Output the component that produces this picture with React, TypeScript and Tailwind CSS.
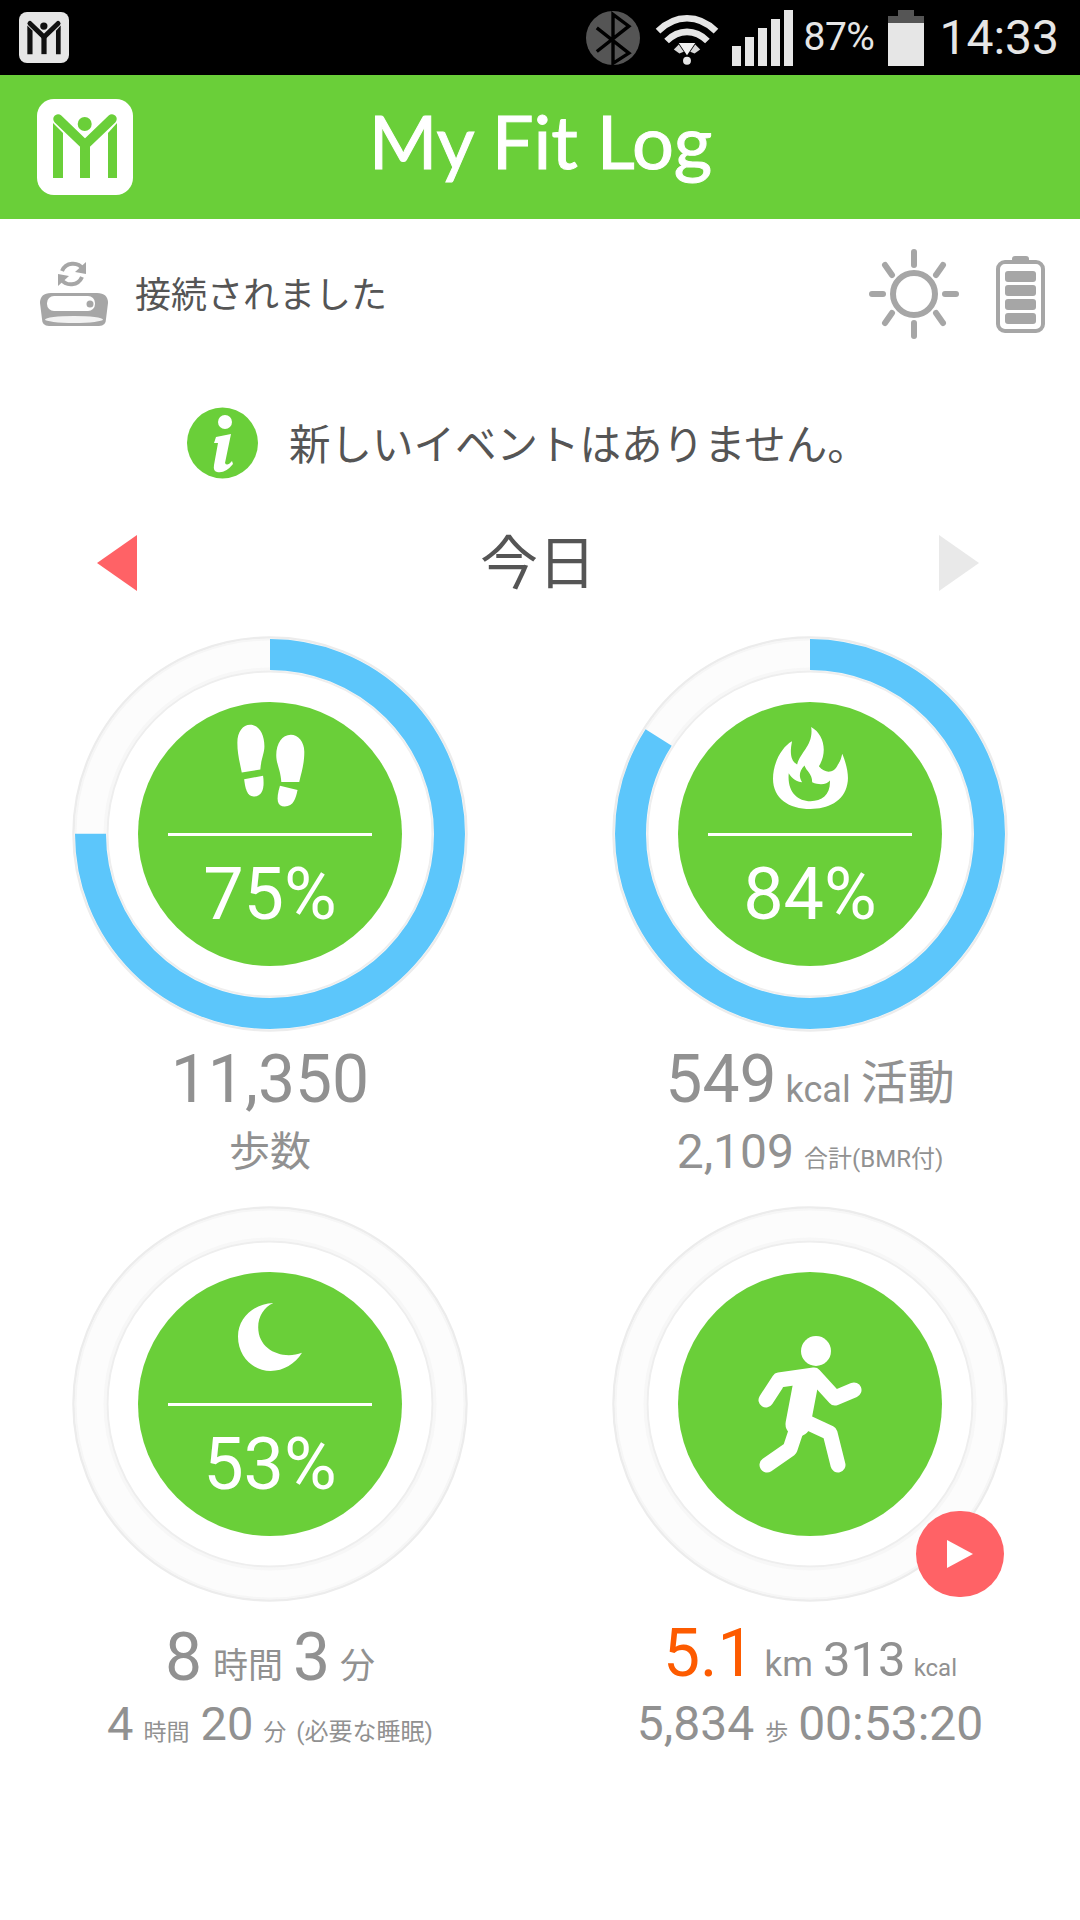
import React from "react";

const GREEN = "#6acf39";
const BLUE = "#5cc6fb";
const GREY = "#a6a6a6";

// Brand mark, shared by the status bar and the header
const LogoMark = ({ color, size }: { color: string; size: number }) => (
  <svg width={size} height={size} viewBox="0 0 96 96">
    <path d="M16 24 L26 34 V79 H16 Z" fill={color} />
    <path d="M80 24 L71 34 V79 H80 Z" fill={color} />
    <rect x="43" y="44" width="10" height="35" fill={color} />
    <path d="M21 20 L48 46 L75 20" fill="none" stroke={color} strokeWidth="9.5" strokeLinecap="round" />
    <circle cx="47.7" cy="25" r="7" fill={color} />
  </svg>
);

const StatusBar = () => (
  <div className="h-[75px] bg-black flex items-center pl-[19px] pr-[21px] text-[#e6e6e6]">
    <div className="w-[50px] h-[51px] bg-[#e6e6e6] rounded-[8px] flex items-center justify-center">
      <LogoMark color="#111" size={50} />
    </div>
    <div className="ml-auto flex items-center">
      <svg width="54" height="54" viewBox="18 30 160 160">
        <circle cx="98" cy="110" r="80" fill="#555" />
        <path d="M50 80 L145 155 L98 185 L98 40 L145 75 L50 150" fill="none" stroke="#000" strokeWidth="10" />
      </svg>
      <svg className="ml-[14px] mt-[5px]" width="66" height="52" viewBox="220 40 200 158">
        <path d="M232 92 C285 40 355 40 408 92" fill="none" stroke="#e6e6e6" strokeWidth="20" />
        <path d="M258 122 C295 85 345 85 382 122" fill="none" stroke="#e6e6e6" strokeWidth="20" />
        <path d="M295 128 L345 128 L320 165 Z" fill="#f2f2f2" />
        <path d="M280 148 L295 133 L310 155 L297 160 Z" fill="#d8d8d8" />
        <path d="M360 148 L345 133 L330 155 L343 160 Z" fill="#d8d8d8" />
        <circle cx="320" cy="182" r="12" fill="#e6e6e6" />
      </svg>
      <svg className="ml-[12px]" width="61" height="56" viewBox="0 0 61 56">
        <rect x="0" y="36" width="9" height="20" fill="#e6e6e6" />
        <rect x="13" y="27" width="9" height="29" fill="#e6e6e6" />
        <rect x="26" y="18" width="9" height="38" fill="#e6e6e6" />
        <rect x="39" y="9" width="9" height="47" fill="#e6e6e6" />
        <rect x="52" y="0" width="9" height="56" fill="#e6e6e6" />
      </svg>
      <span className="ml-[10px] text-[39px] leading-none tracking-[-0.5px] w-[72px]">87%</span>
      <svg className="ml-[13px]" width="36" height="56" viewBox="0 0 36 56">
        <rect x="10" y="0" width="16" height="7" fill="#555" />
        <rect x="0" y="6" width="36" height="7" fill="#555" />
        <rect x="0" y="13" width="36" height="43" fill="#e6e6e6" />
      </svg>
      <span className="ml-[15px] text-[48px] leading-none">14:33</span>
    </div>
  </div>
);

const Header = () => (
  <div className="h-[144px] bg-[#6acf39] flex items-center pl-[37px] pr-[132px]">
    <div className="w-[96px] h-[96px] bg-white rounded-[17px]">
      <LogoMark color={GREEN} size={96} />
    </div>
    <div className="flex-1 text-center text-white text-[74px] leading-none font-[Lato,sans-serif] pb-[12px] [-webkit-text-stroke:1px_white]">
      My Fit Log
    </div>
  </div>
);

const ConnectionRow = () => (
  <div className="h-[150px] flex items-center pl-[39px] pr-[35px]">
    <svg width="71" height="66" viewBox="0 0 71 66">
      <path d="M23 10 A12 12 0 0 1 44 8" fill="none" stroke={GREY} strokeWidth="4" />
      <path d="M47 1 L47 13 L36 11 Z" fill={GREY} />
      <path d="M43 16 A12 12 0 0 1 22 18" fill="none" stroke={GREY} strokeWidth="4" />
      <path d="M19 25 L19 13 L30 15 Z" fill={GREY} />
      <path d="M1 42 Q1 32 12 32 L58 32 Q69 32 69 42 L67 58 Q67 65 60 65 L10 65 Q3 65 3 58 Z" fill={GREY} />
      <rect x="8" y="35" width="48" height="15" rx="7" fill="#fff" />
      <circle cx="51" cy="43" r="3.5" fill={GREY} />
      <ellipse cx="35" cy="58.5" rx="29" ry="3.5" fill="#f2f2f2" />
    </svg>
    <span className="ml-[25px] mt-[4px] text-[36px] leading-none text-[#555555]">接続されました</span>
    <svg className="ml-auto" width="90" height="90" viewBox="0 0 90 90">
      <circle cx="45" cy="45" r="21" fill="none" stroke={GREY} strokeWidth="6" />
      <g stroke={GREY} strokeWidth="6" strokeLinecap="round">
        <path d="M45 3 V16" />
        <path d="M45 74 V87" />
        <path d="M3 45 H14" />
        <path d="M76 45 H87" />
        <path d="M16 16 L23 26" />
        <path d="M74 16 L67 26" />
        <path d="M16 74 L23 64" />
        <path d="M74 74 L67 64" />
      </g>
    </svg>
    <svg className="ml-[37px]" width="49" height="77" viewBox="0 0 49 77">
      <rect x="16" y="0" width="17" height="8" rx="3" fill={GREY} />
      <rect x="2" y="6" width="45" height="69" rx="7" fill="none" stroke={GREY} strokeWidth="4" />
      <rect x="9" y="15" width="31" height="11" rx="3" fill={GREY} />
      <rect x="9" y="29" width="31" height="11" rx="3" fill={GREY} />
      <rect x="9" y="43" width="31" height="11" rx="3" fill={GREY} />
      <rect x="9" y="57" width="31" height="11" rx="3" fill={GREY} />
    </svg>
  </div>
);

const InfoRow = () => (
  <div className="mt-[38px] h-[72px] flex items-center pl-[187px]">
    <svg width="71" height="72" viewBox="0 0 71 72">
      <circle cx="35.5" cy="36" r="35.5" fill={GREEN} />
      <ellipse cx="38" cy="15" rx="7" ry="7" fill="#fff" />
      <path d="M29 30 L44 27 L38 56 Q40 60 45 54 L46 57 Q38 67 30 65 Q26 64 27 58 L31 36 L27 36 Z" fill="#fff" />
    </svg>
    <span className="ml-[31px] mt-[6px] text-[41.5px] leading-none text-[#555555]">新しいイベントはありません。</span>
  </div>
);

const DayNav = () => (
  <div className="mt-[56px] h-[56px] flex items-center justify-between pl-[97px] pr-[101px]">
    <svg width="40" height="56" viewBox="0 0 40 56">
      <path d="M40 0 V56 L0 28 Z" fill="#ff6266" />
    </svg>
    <span className="mb-[8px] text-[58px] leading-none text-[#555555] font-['Noto_Sans_CJK_JP',sans-serif]">今日</span>
    <svg width="40" height="56" viewBox="0 0 40 56">
      <path d="M0 0 V56 L40 28 Z" fill="#e9e9e9" />
    </svg>
  </div>
);

// Progress ring with the green disc in the middle
const Ring = ({ percent, children }: { percent?: number; children: React.ReactNode }) => {
  const r = 179.5;
  const c = 2 * Math.PI * r;
  return (
    <div className="relative w-[396px] h-[396px] flex items-center justify-center">
      <svg className="absolute inset-0" width="396" height="396" viewBox="0 0 396 396">
        <circle cx="198" cy="198" r="196.5" fill="#fcfcfc" stroke="#ececec" strokeWidth="2.5" />
        <circle cx="198" cy="198" r="194.5" fill="none" stroke="#f6f6f6" strokeWidth="2" />
        <circle cx="198" cy="198" r="165" fill="none" stroke="#f7f7f7" strokeWidth="3" />
        <circle cx="198" cy="198" r="162.5" fill="#fff" stroke="#eeeeee" strokeWidth="2" />
        {percent !== undefined && (
          <circle
            cx="198"
            cy="198"
            r={r}
            fill="none"
            stroke={BLUE}
            strokeWidth="31"
            strokeDasharray={`${(c * percent) / 100} ${c}`}
            transform="rotate(-90 198 198)"
          />
        )}
      </svg>
      <div className="relative w-[264px] h-[264px] rounded-full bg-[#6acf39] flex flex-col items-center text-white">
        {children}
      </div>
    </div>
  );
};

const Disc = ({ icon, pb, label }: { icon: React.ReactNode; pb: string; label: string }) => (
  <>
    <div className={`h-[131px] flex items-end ${pb}`}>{icon}</div>
    <div className="w-[204px] h-[3px] bg-white" />
    <div className="mt-[23px] text-[72px] leading-none">{label}</div>
  </>
);

const Feet = (
  <svg width="71" height="86" viewBox="525 295 210 240" preserveAspectRatio="none">
    <g fill="#fff">
      <path d="M570 300 C595 300 612 325 612 360 C612 380 602 395 600 425 L545 433 C538 400 532 380 532 350 C532 320 548 300 570 300 Z" />
      <path d="M552 452 L608 442 C612 470 610 500 580 500 C560 500 555 475 552 452 Z" />
      <path d="M690 328 C665 328 647 352 647 385 C647 410 660 425 662 460 L715 460 C722 430 730 410 730 375 C730 348 712 328 690 328 Z" />
      <path d="M658 470 L710 482 C705 505 698 528 672 528 C650 528 645 510 658 470 Z" />
    </g>
  </svg>
);

const Flame = (
  <svg width="75" height="82" viewBox="518 300 224 230" preserveAspectRatio="none">
    <path
      fill="#fff"
      fillRule="evenodd"
      d="M632 300 C670 320 682 370 655 410 C675 432 700 430 712 405 C720 395 722 385 725 375 C740 410 745 440 740 460 C730 510 680 530 630 530 C565 530 518 500 518 445 C518 400 545 355 575 340 C568 370 570 395 590 405 C600 370 640 350 632 300 Z M565 430 C575 445 590 455 605 455 C595 440 595 425 612 408 C618 425 635 430 635 455 C660 465 680 460 688 450 C690 490 665 508 630 508 C590 508 560 480 565 430 Z"
    />
  </svg>
);

const Moon = (
  <svg width="64" height="68" viewBox="535 293 190 187" preserveAspectRatio="none">
    <path
      fill="#fff"
      d="M640 293 C580 295 535 335 535 385 C535 440 580 480 632 480 C670 480 705 460 725 430 C670 450 595 425 595 360 C595 330 612 305 640 293 Z"
    />
  </svg>
);

const Runner = () => (
  <svg width="104" height="137" viewBox="0 0 104 137">
    <circle cx="58" cy="15" r="15" fill="#fff" />
    <g fill="none" stroke="#fff" strokeLinecap="round" strokeLinejoin="round">
      <path d="M8 64 L21 44 L56 39 L77 62 L96 54" strokeWidth="15" />
      <path d="M48 46 L40 88" strokeWidth="25" />
      <path d="M39 92 L32 113 L9 129" strokeWidth="15" />
      <path d="M44 84 L72 97 L80 129" strokeWidth="15" />
    </g>
  </svg>
);

export default function App() {
  return (
    <div className="w-[1080px] h-[1920px] bg-white flex flex-col font-[Roboto,'Noto_Sans_CJK_JP',sans-serif]">
      <StatusBar />
      <Header />
      <ConnectionRow />
      <InfoRow />
      <DayNav />

      <div className="mt-[45px] grid grid-cols-2 auto-rows-[570px] text-[#919191]">
        <div className="flex flex-col items-center">
          <Ring percent={75}>
            <Disc icon={Feet} pb="pb-[24px]" label="75%" />
          </Ring>
          <div className="mt-[15px] h-[66px] text-[66px] leading-none">11,350</div>
          <div className="mt-[11px] h-[56px] text-[41px] leading-[56px]">歩数</div>
        </div>

        <div className="flex flex-col items-center">
          <Ring percent={84}>
            <Disc icon={Flame} pb="pb-[24px]" label="84%" />
          </Ring>
          <div className="mt-[15px] h-[66px] flex items-baseline justify-center leading-none">
            <span className="text-[66px]">549</span>
            <span className="ml-[9px] text-[36px]">kcal</span>
            <span className="ml-[10px] -translate-y-[3px] text-[47px]">活動</span>
          </div>
          <div className="mt-[11px] h-[56px] flex items-baseline justify-center leading-[56px]">
            <span className="text-[48px]">2,109</span>
            <span className="ml-[10px] -translate-y-[1px] text-[24px]">合計(BMR付)</span>
          </div>
        </div>

        <div className="flex flex-col items-center">
          <Ring>
            <Disc icon={Moon} pb="pb-[32px]" label="53%" />
          </Ring>
          <div className="mt-[23px] h-[66px] flex items-baseline justify-center leading-none">
            <span className="text-[66px]">8</span>
            <span className="ml-[11px] -translate-y-[2px] text-[35px]">時間</span>
            <span className="ml-[10px] text-[66px]">3</span>
            <span className="ml-[10px] -translate-y-[2px] text-[35px]">分</span>
          </div>
          <div className="mt-[5px] h-[56px] flex items-baseline justify-center leading-[56px]">
            <span className="text-[47px]">4</span>
            <span className="ml-[10px] text-[23px]">時間</span>
            <span className="ml-[11px] text-[47px]">20</span>
            <span className="ml-[10px] text-[23px]">分</span>
            <span className="ml-[10px] text-[24px]">(必要な睡眠)</span>
          </div>
        </div>

        <div className="flex flex-col items-center">
          <div className="relative">
            <Ring>
              <div className="h-full flex items-center">
                <Runner />
              </div>
            </Ring>
            <div className="absolute left-[304px] top-[305px] w-[88px] h-[86px] rounded-full bg-[#ff6266] flex items-center justify-center">
              <svg width="26" height="28" viewBox="0 0 26 28">
                <path d="M0 0 L26 14 L0 28 Z" fill="#fff" />
              </svg>
            </div>
          </div>
          <div className="mt-[19px] h-[66px] flex items-baseline justify-center leading-none">
            <span className="text-[66px] text-[#fd5b00]">5.1</span>
            <span className="ml-[10px] text-[35px]">km</span>
            <span className="ml-[10px] text-[49px]">313</span>
            <span className="ml-[8px] text-[24px]">kcal</span>
          </div>
          <div className="mt-[9px] h-[56px] flex items-baseline justify-center leading-[56px]">
            <span className="text-[48px]">5,834</span>
            <span className="ml-[11px] text-[23px]">歩</span>
            <span className="ml-[10px] text-[48px]">00:53:20</span>
          </div>
        </div>
      </div>
    </div>
  );
}
